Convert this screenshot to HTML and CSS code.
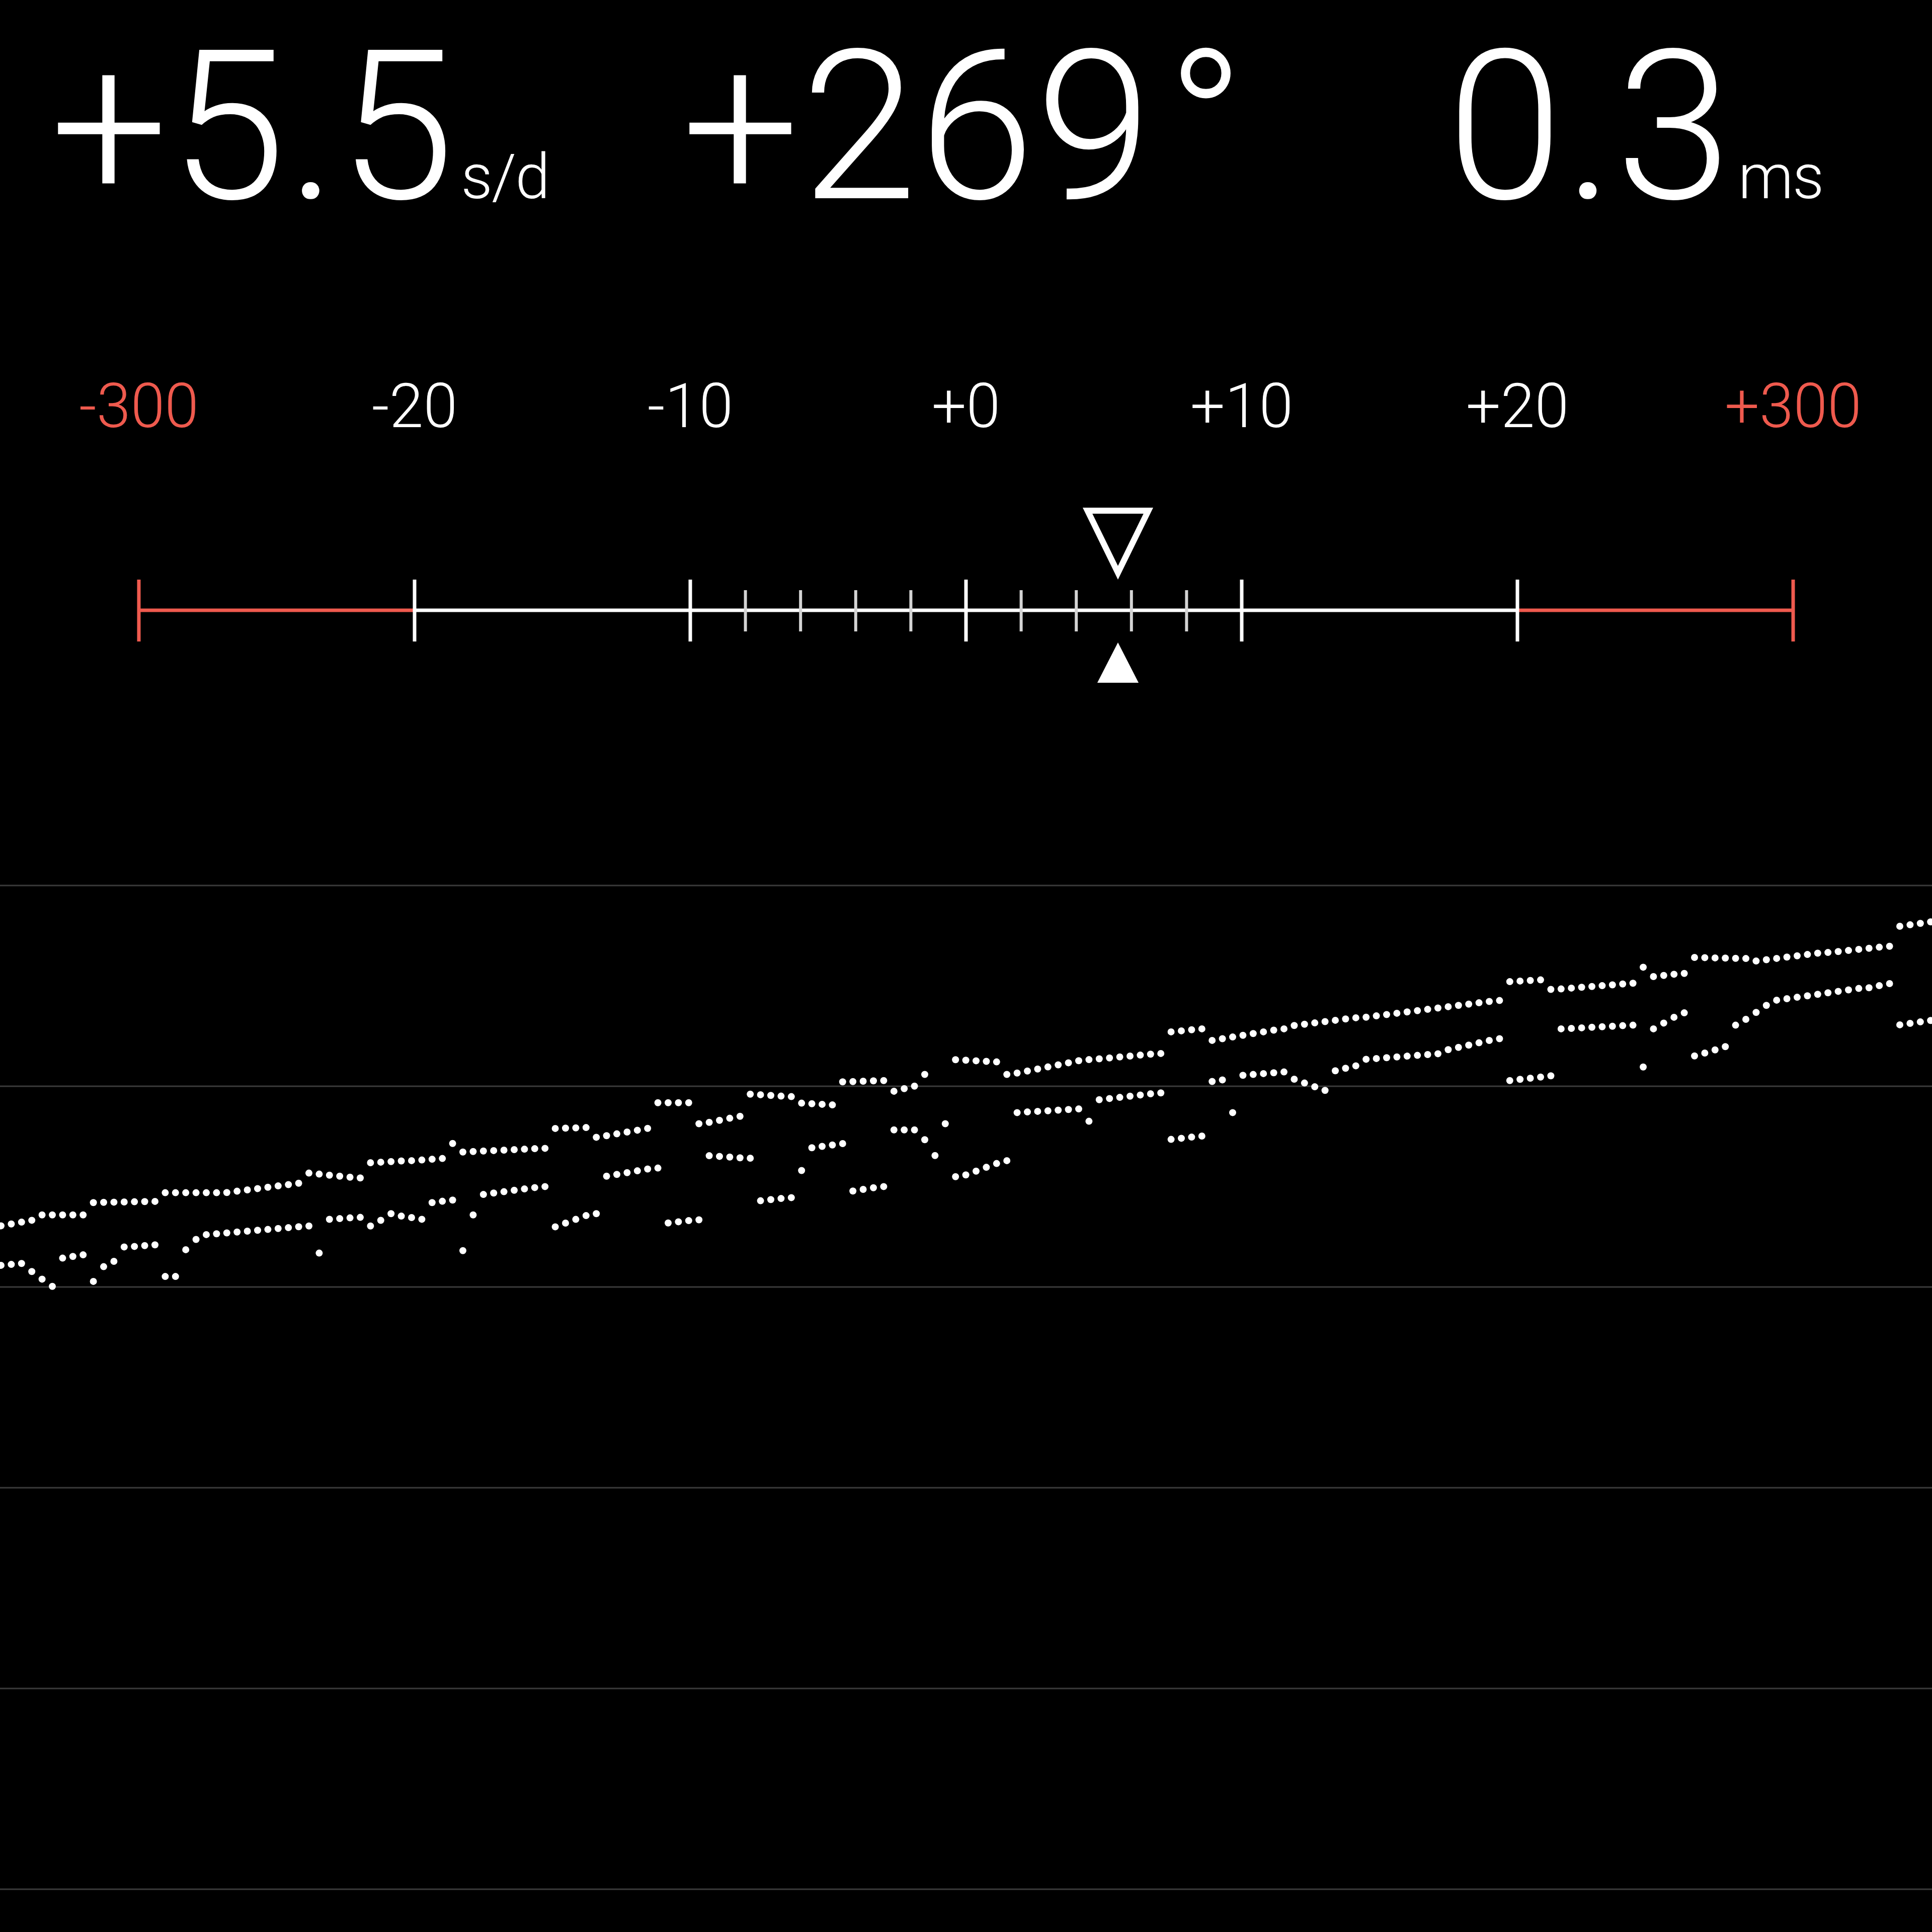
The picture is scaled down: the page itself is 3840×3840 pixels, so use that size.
FILE: index.html
```html
<!DOCTYPE html>
<html lang="en">
<head>
<meta charset="utf-8">
<title>Timegrapher</title>
<link rel="stylesheet" href="styles.css">
</head>
<body>
<main class="screen">
  <header class="readouts">
    <div class="readout"><span class="value">+5.5</span><span class="unit">s/d</span></div>
    <div class="readout"><span class="value">+269<span class="deg">°</span></span></div>
    <div class="readout"><span class="value">0.3</span><span class="unit">ms</span></div>
  </header>

  <div class="scale-labels">
    <span class="label warn">-300</span>
    <span class="label">-20</span>
    <span class="label">-10</span>
    <span class="label">+0</span>
    <span class="label">+10</span>
    <span class="label">+20</span>
    <span class="label warn">+300</span>
  </div>

  <svg class="gauge" width="3840" height="400" viewBox="0 1000 3840 400" xmlns="http://www.w3.org/2000/svg">
    <line class="g-red" x1="276" y1="1213" x2="824" y2="1213"/>
    <line class="g-white" x1="824" y1="1213" x2="3016" y2="1213"/>
    <line class="g-red" x1="3016" y1="1213" x2="3564" y2="1213"/>
    <line class="tick-red" x1="276" y1="1152" x2="276" y2="1275"/>
    <line class="tick-major" x1="824" y1="1152" x2="824" y2="1275"/>
    <line class="tick-major" x1="1372" y1="1152" x2="1372" y2="1275"/>
    <line class="tick-minor" x1="1481.6" y1="1173" x2="1481.6" y2="1255"/>
    <line class="tick-minor" x1="1591.2" y1="1173" x2="1591.2" y2="1255"/>
    <line class="tick-minor" x1="1700.8" y1="1173" x2="1700.8" y2="1255"/>
    <line class="tick-minor" x1="1810.4" y1="1173" x2="1810.4" y2="1255"/>
    <line class="tick-major" x1="1920" y1="1152" x2="1920" y2="1275"/>
    <line class="tick-minor" x1="2029.6" y1="1173" x2="2029.6" y2="1255"/>
    <line class="tick-minor" x1="2139.2" y1="1173" x2="2139.2" y2="1255"/>
    <line class="tick-minor" x1="2248.8" y1="1173" x2="2248.8" y2="1255"/>
    <line class="tick-minor" x1="2358.4" y1="1173" x2="2358.4" y2="1255"/>
    <line class="tick-major" x1="2468" y1="1152" x2="2468" y2="1275"/>
    <line class="tick-major" x1="3016" y1="1152" x2="3016" y2="1275"/>
    <line class="tick-red" x1="3564" y1="1152" x2="3564" y2="1275"/>
    <polygon class="pointer-outline" points="2161.6,1015 2282.4,1015 2222,1138.4"/>
    <polygon class="pointer-fill" points="2222,1277 2263,1357 2181,1357"/>
  </svg>

  <div class="graph">
    <svg id="trace" class="trace" width="3840" height="2440" viewBox="0 1400 3840 2440" xmlns="http://www.w3.org/2000/svg">
      <g class="gridlines">
        <rect x="0" y="1758.5" width="3840" height="3"/>
        <rect x="0" y="2157.5" width="3840" height="3"/>
        <rect x="0" y="2556.5" width="3840" height="3"/>
        <rect x="0" y="2955.5" width="3840" height="3"/>
        <rect x="0" y="3354.5" width="3840" height="3"/>
        <rect x="0" y="3753.5" width="3840" height="3"/>
      </g>
      <g id="dots" class="dots"></g>
    </svg>
  </div>
</main>
<script src="script.js"></script>
</body>
</html>
```

FILE: styles.css
```css
html, body {
  margin: 0;
  padding: 0;
  background: #000;
}

body {
  width: 3840px;
  height: 3840px;
  overflow: hidden;
  color: #fff;
  font-family: Roboto, "Liberation Sans", sans-serif;
  font-weight: 300;
}

.screen {
  display: flex;
  flex-direction: column;
  width: 3840px;
}

.readouts {
  display: grid;
  grid-template-columns: 1255px 1521px auto;
  height: 460px;
  box-sizing: border-box;
  padding-top: 45px;
  padding-left: 100px;
  font-size: 415px;
  line-height: 415px;
  white-space: nowrap;
}

.readout .value {
  letter-spacing: 3px;
}

.readout .deg {
  margin-left: 26px;
}

.readout .unit {
  font-size: 124px;
  line-height: 1;
  letter-spacing: -2px;
  margin-left: 10px;
}

.scale-labels {
  display: grid;
  grid-template-columns: repeat(7, 548px);
  margin: 287px 0 0 2px;
  font-size: 122px;
  line-height: 122px;
  text-align: center;
}

.label {
  color: #fff;
}

.label.warn {
  color: #ef5a4e;
}

.gauge {
  display: block;
  margin-top: 131px;
}

.g-white { stroke: #fff; stroke-width: 7; }
.g-red { stroke: #ef5a4e; stroke-width: 7; }
.tick-major { stroke: #fff; stroke-width: 7; }
.tick-red { stroke: #ef5a4e; stroke-width: 7; }
.tick-minor { stroke: #d4d4d4; stroke-width: 6; }

.pointer-outline {
  fill: none;
  stroke: #fff;
  stroke-width: 12;
  stroke-linejoin: miter;
}

.pointer-fill {
  fill: #fff;
}

.graph {
  display: block;
}

.trace {
  display: block;
}

.gridlines rect {
  fill: #3a3a3a;
}

.dots circle {
  fill: #fff;
}
```

FILE: script.js
```js
(function () {
  var S = 3840 / 1568;
  var STEP = 20.4;
  var OFF = 2;
  var COLS = 189;

  var upper = [
    [0,995,28,990],[33,986,68,986],[75,976,128,975],[135,968,178,968],
    [183,968,245,960],[250,952,290,956],[295,944,330,942],[335,942,362,940],
    [368,928,368,928],[375,935,440,932],[445,916,480,915],[485,923,530,915],
    [535,895,562,895],[570,912,600,906],[610,888,640,890],[645,895,680,897],
    [686,878,715,877],[720,887,748,880],[753,872,753,872],[775,860,812,862],
    [820,872,880,860],[885,860,940,855],[945,838,975,835],[980,845,1040,835],
    [1045,833,1100,826],[1105,826,1215,812],[1220,797,1255,795],[1262,803,1325,798],
    [1330,785,1330,785],[1338,793,1365,790],[1372,777,1420,778],[1425,780,1480,773],
    [1485,773,1532,768],[1540,752,1568,748]
  ];

  var lower = [
    [0,1027,22,1025],[28,1032,40,1044],[45,1022,70,1018],[80,1040,80,1040],
    [86,1028,95,1022],[104,1012,130,1010],[138,1036,138,1036],[150,1015,160,1005],
    [168,1002,250,995],[257,1017,257,1017],[262,990,290,988],[297,1013,297,1013],
    [302,995,322,982],[327,987,345,990],[352,976,365,974],[373,1015,373,1015],
    [380,986,380,986],[388,970,440,963],[447,997,480,985],[490,955,530,948],
    [538,993,565,990],[577,938,605,940],[613,975,640,972],[648,950,648,950],
    [655,932,685,928],[690,967,715,963],[722,917,745,917],[752,925,760,940],
    [768,912,768,912],[780,955,815,942],[825,903,875,900],[882,910,882,910],
    [888,893,940,887],[948,925,975,922],[982,878,995,876],[1000,903,1000,903],
    [1005,873,1042,870],[1048,875,1075,885],[1080,870,1100,865],[1105,860,1170,855],
    [1175,852,1215,843],[1225,877,1260,873],[1268,835,1325,832],[1335,866,1335,866],
    [1342,835,1365,822],[1376,857,1405,848],[1410,832,1435,815],[1440,812,1510,802],
    [1515,802,1535,798],[1540,832,1568,828]
  ];

  var NS = "http://www.w3.org/2000/svg";
  var g = document.getElementById("dots");

  function dot(x, y) {
    var c = document.createElementNS(NS, "circle");
    c.setAttribute("cx", x.toFixed(1));
    c.setAttribute("cy", y.toFixed(1));
    c.setAttribute("r", "7");
    g.appendChild(c);
  }

  function trace(runs) {
    for (var k = 0; k < COLS; k++) {
      var xs = (OFF + k * STEP) / S;
      var best = null, bestD = 1e9;
      for (var i = 0; i < runs.length; i++) {
        var r = runs[i];
        var d = Math.max(0, r[0] - xs, xs - r[2]);
        if (d < bestD) { bestD = d; best = r; }
      }
      if (!best || bestD > 5) continue;
      var t = best[2] > best[0] ? (xs - best[0]) / (best[2] - best[0]) : 0;
      t = Math.min(1, Math.max(0, t));
      dot(OFF + k * STEP, (best[1] + (best[3] - best[1]) * t) * S);
    }
  }

  trace(upper);
  trace(lower);
})();
```
